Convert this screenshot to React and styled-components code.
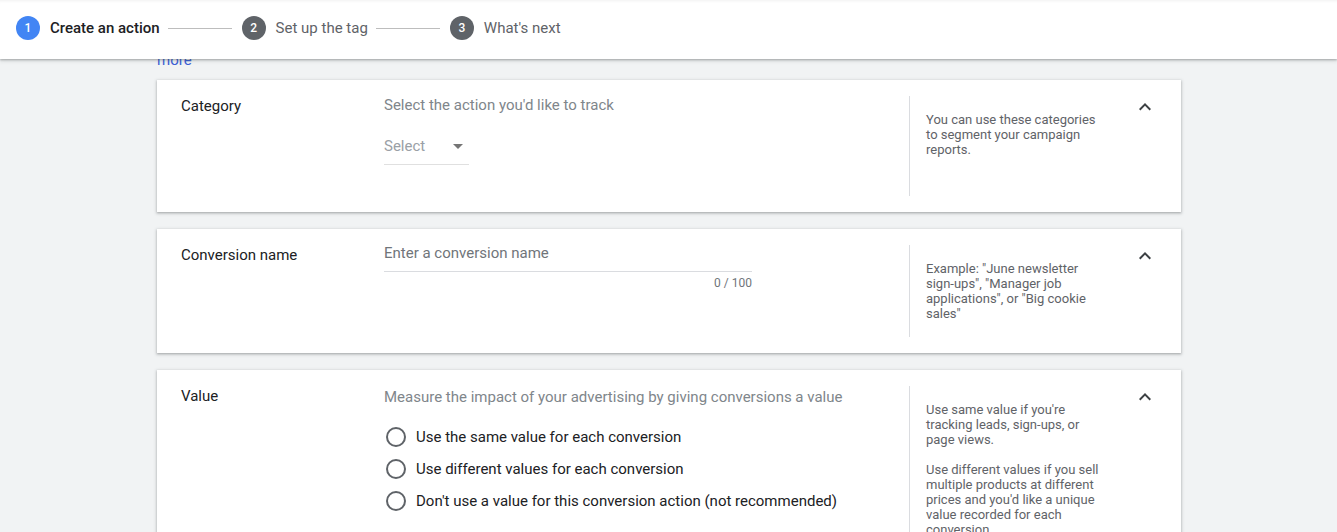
import React from "react";
import styled, { createGlobalStyle } from "styled-components";

const Global = createGlobalStyle`
  html, body { margin: 0; padding: 0; }
  body {
    background: #f1f3f4;
    font-family: Roboto, "Noto Sans", Arial, sans-serif;
    overflow: hidden;
    -webkit-font-smoothing: antialiased;
  }
`;

const Header = styled.header`
  position: relative;
  z-index: 2;
  height: 59px;
  box-sizing: border-box;
  background: #fff;
  padding: 16px 16px 0;
  box-shadow: inset 0 3px 3px -2px rgba(0, 0, 0, 0.06), 0 1px 2px rgba(60, 64, 67, 0.35), 0 2px 4px rgba(60, 64, 67, 0.15);
`;

const Stepper = styled.nav`
  display: flex;
  align-items: center;
  height: 24px;
`;

const Step = styled.div`
  display: flex;
  align-items: center;
  height: 24px;
`;

const StepNum = styled.span`
  width: 24px;
  height: 24px;
  border-radius: 50%;
  background: ${(p) => (p.$active ? "#4285f4" : "#5f6368")};
  color: #fff;
  font-size: 12px;
  font-weight: 500;
  display: flex;
  align-items: center;
  justify-content: center;
  margin-right: 10px;
`;

const StepLabel = styled.span`
  font-size: 15px;
  line-height: 24px;
  font-weight: ${(p) => (p.$active ? 500 : 400)};
  color: ${(p) => (p.$active ? "#202124" : "#5f6368")};
`;

const StepLine = styled.span`
  width: 64px;
  height: 1px;
  background: #bdbdbd;
  margin: 0 10px 0 8px;
`;

const Main = styled.main`
  width: 1024px;
  margin: -7px 0 0 157px;
  position: relative;
  z-index: 1;
  display: flex;
  flex-direction: column;
  gap: 17px;
`;

const MoreLink = styled.a`
  display: block;
  font-size: 15px;
  line-height: 16px;
  color: #3b5fd6;
  margin-bottom: -5px;
`;

const Card = styled.section`
  background: #fff;
  display: flex;
  padding: 16px 24px 16px 24px;
  box-shadow: 0 1px 2px rgba(60, 64, 67, 0.3), 0 1px 3px 1px rgba(60, 64, 67, 0.15);
`;

const Label = styled.div`
  flex: 0 0 203px;
  font-size: 15px;
  line-height: 18px;
  padding-top: 1px;
  color: #202124;
`;

const Content = styled.div`
  flex: 1;
  min-width: 0;
  min-height: ${(p) => p.$minHeight || 0}px;
`;

const Description = styled.div`
  font-size: 15px;
  line-height: 16px;
  color: #80868b;
  padding-top: ${(p) => p.$offset || 0}px;
`;

const SelectBox = styled.div`
  margin-top: 15px;
  height: 36px;
  display: flex;
  align-items: center;
  justify-content: space-between;
  border-bottom: 1px solid #e0e0e0;
  font-size: 15px;
  color: #9aa0a6;
  padding-right: 6px;
  width: 79px;
`;

const Arrow = styled.span`
  width: 0;
  height: 0;
  border-left: 5px solid transparent;
  border-right: 5px solid transparent;
  border-top: 5px solid #757575;
`;

const InputWrap = styled.div`
  width: 368px;
`;

const Input = styled.input`
  display: block;
  width: 100%;
  box-sizing: border-box;
  border: none;
  border-bottom: 1px solid #dadce0;
  padding: 0 0 10px;
  font-family: inherit;
  font-size: 15px;
  line-height: 16px;
  height: 27px;
  outline: none;
  color: #202124;
  &::placeholder { color: #70757a; }
`;

const Counter = styled.div`
  margin-top: 3px;
  text-align: right;
  font-size: 12px;
  line-height: 16px;
  color: #70757a;
`;

const RadioList = styled.div`
  margin-top: 16px;
  display: flex;
  flex-direction: column;
`;

const RadioRow = styled.label`
  display: flex;
  align-items: center;
  height: 32px;
  gap: 10px;
  font-size: 15px;
  color: #202124;
  cursor: pointer;
`;

const RadioCircle = styled.span`
  width: 16px;
  height: 16px;
  border: 2px solid #5f6368;
  border-radius: 50%;
  margin-left: 2px;
`;

const Aside = styled.aside`
  flex: 0 0 224px;
  box-sizing: border-box;
  border-left: 1px solid #dadce0;
  padding: 16px 32px 16px 16px;
  font-size: 13px;
  line-height: 15px;
  color: #5f6368;
`;

const HelpPara = styled.p`
  margin: 0 0 15px;
  &:last-child { margin-bottom: 0; }
`;

const Toggle = styled.button`
  flex: 0 0 24px;
  width: 24px;
  height: 24px;
  padding: 0;
  border: none;
  background: none;
  color: #3c4043;
  cursor: pointer;
  margin-top: -1px;
`;

const ChevronUp = () => (
  <svg width="24" height="24" viewBox="0 0 24 24" fill="currentColor">
    <path d="M12 8l-6 6 1.41 1.41L12 10.83l4.59 4.58L18 14z" />
  </svg>
);

const steps = [
  { n: 1, label: "Create an action", active: true },
  { n: 2, label: "Set up the tag" },
  { n: 3, label: "What's next" },
];

const radios = [
  "Use the same value for each conversion",
  "Use different values for each conversion",
  "Don't use a value for this conversion action (not recommended)",
];

export default function App() {
  return (
    <>
      <Global />
      <Header>
        <Stepper>
          {steps.map((s, i) => (
            <React.Fragment key={s.n}>
              {i > 0 && <StepLine />}
              <Step>
                <StepNum $active={s.active}>{s.n}</StepNum>
                <StepLabel $active={s.active}>{s.label}</StepLabel>
              </Step>
            </React.Fragment>
          ))}
        </Stepper>
      </Header>
      <Main>
        <MoreLink>more</MoreLink>
        <Card>
          <Label>Category</Label>
          <Content $minHeight={100}>
            <Description $offset={1}>Select the action you'd like to track</Description>
            <SelectBox>
              <span>Select</span>
              <Arrow />
            </SelectBox>
          </Content>
          <Aside>
            <HelpPara>You can use these categories to segment your campaign reports.</HelpPara>
          </Aside>
          <Toggle aria-label="Collapse"><ChevronUp /></Toggle>
        </Card>
        <Card>
          <Label>Conversion name</Label>
          <Content>
            <InputWrap>
              <Input placeholder="Enter a conversion name" />
              <Counter>0 / 100</Counter>
            </InputWrap>
          </Content>
          <Aside>
            <HelpPara>
              Example: "June newsletter sign-ups", "Manager job applications", or "Big cookie sales"
            </HelpPara>
          </Aside>
          <Toggle aria-label="Collapse"><ChevronUp /></Toggle>
        </Card>
        <Card>
          <Label>Value</Label>
          <Content>
            <Description $offset={3}>
              Measure the impact of your advertising by giving conversions a value
            </Description>
            <RadioList>
              {radios.map((r) => (
                <RadioRow key={r}>
                  <RadioCircle />
                  {r}
                </RadioRow>
              ))}
            </RadioList>
          </Content>
          <Aside>
            <HelpPara>Use same value if you're tracking leads, sign-ups, or page views.</HelpPara>
            <HelpPara>
              Use different values if you sell multiple products at different prices and you'd like a unique value recorded for each conversion.
            </HelpPara>
          </Aside>
          <Toggle aria-label="Collapse"><ChevronUp /></Toggle>
        </Card>
      </Main>
    </>
  );
}
